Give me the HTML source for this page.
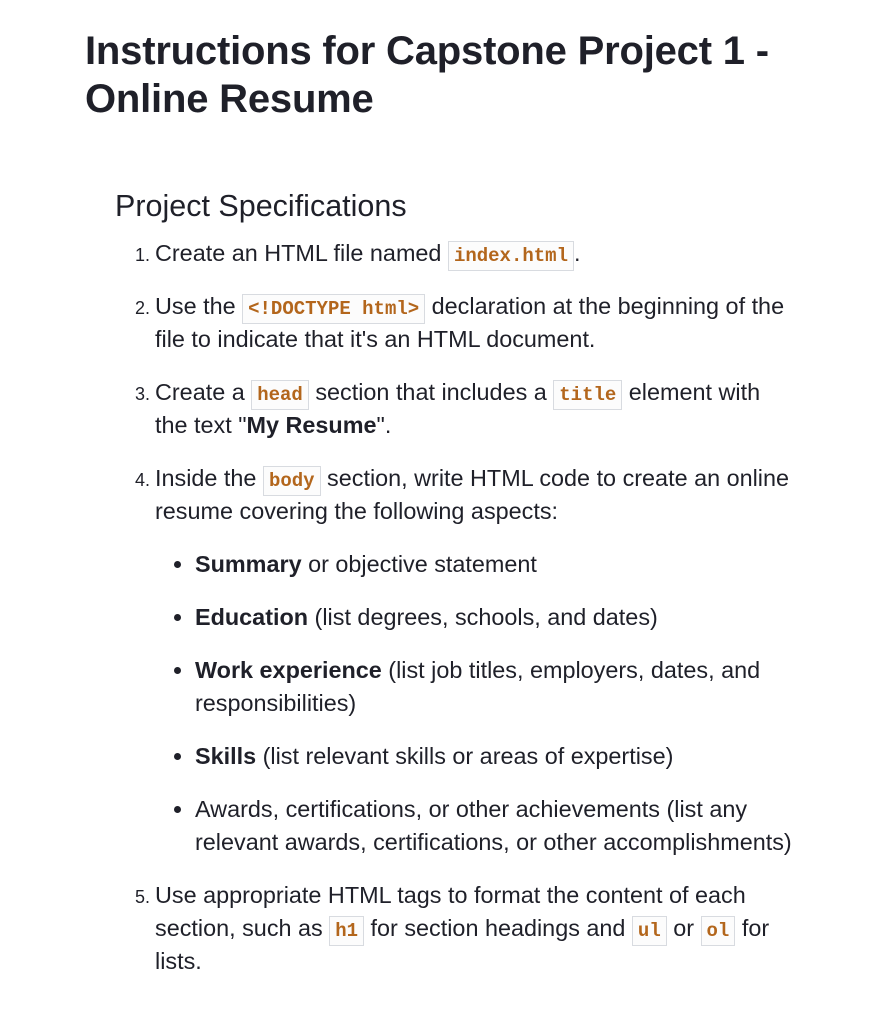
<!DOCTYPE html>
<html><head><style>
body{margin:0;background:#fff;color:#1f2029;font-family:"Liberation Sans",sans-serif;width:875px;height:1033px;overflow:hidden}
h1{position:absolute;left:85px;top:27px;margin:0;font-size:40px;line-height:48px;font-weight:bold;width:760px;letter-spacing:-0.2px}
h2{position:absolute;left:115px;top:186px;margin:0;font-size:30.5px;font-weight:normal;line-height:40px}
ol{position:absolute;left:115px;top:237px;margin:0;padding-left:40px;width:640px;font-size:23.4px;line-height:33px}
ol>li{margin-bottom:20px;padding-left:0}
ol>li::marker{font-size:18px}
ul{margin:20px 0 0;padding-left:40px;list-style:disc}
ul>li{margin-bottom:20px}
ul>li:last-child{margin-bottom:0}
code{font-family:"Liberation Mono",monospace;font-weight:bold;color:#b3661c;font-size:19px;line-height:1;border:1px solid #d8dbe0;padding:3px 5px;background:#fcfcfc}
</style></head><body>
<h1>Instructions for Capstone Project 1 - Online Resume</h1>
<h2>Project Specifications</h2>
<ol>
<li>Create an HTML file named <code>index.html</code>.</li>
<li>Use the <code>&lt;!DOCTYPE html&gt;</code> declaration at the beginning of the file to indicate that it's an HTML document.</li>
<li>Create a <code>head</code> section that includes a <code>title</code> element with the text "<b>My Resume</b>".</li>
<li>Inside the <code>body</code> section, write HTML code to create an online resume covering the following aspects:
<ul>
<li><b>Summary</b> or objective statement</li>
<li><b>Education</b> (list degrees, schools, and dates)</li>
<li><b>Work experience</b> (list job titles, employers, dates, and responsibilities)</li>
<li><b>Skills</b> (list relevant skills or areas of expertise)</li>
<li>Awards, certifications, or other achievements (list any relevant awards, certifications, or other accomplishments)</li>
</ul></li>
<li>Use appropriate HTML tags to format the content of each section, such as <code>h1</code> for section headings and <code>ul</code> or <code>ol</code> for lists.</li>
</ol>
</body></html>
